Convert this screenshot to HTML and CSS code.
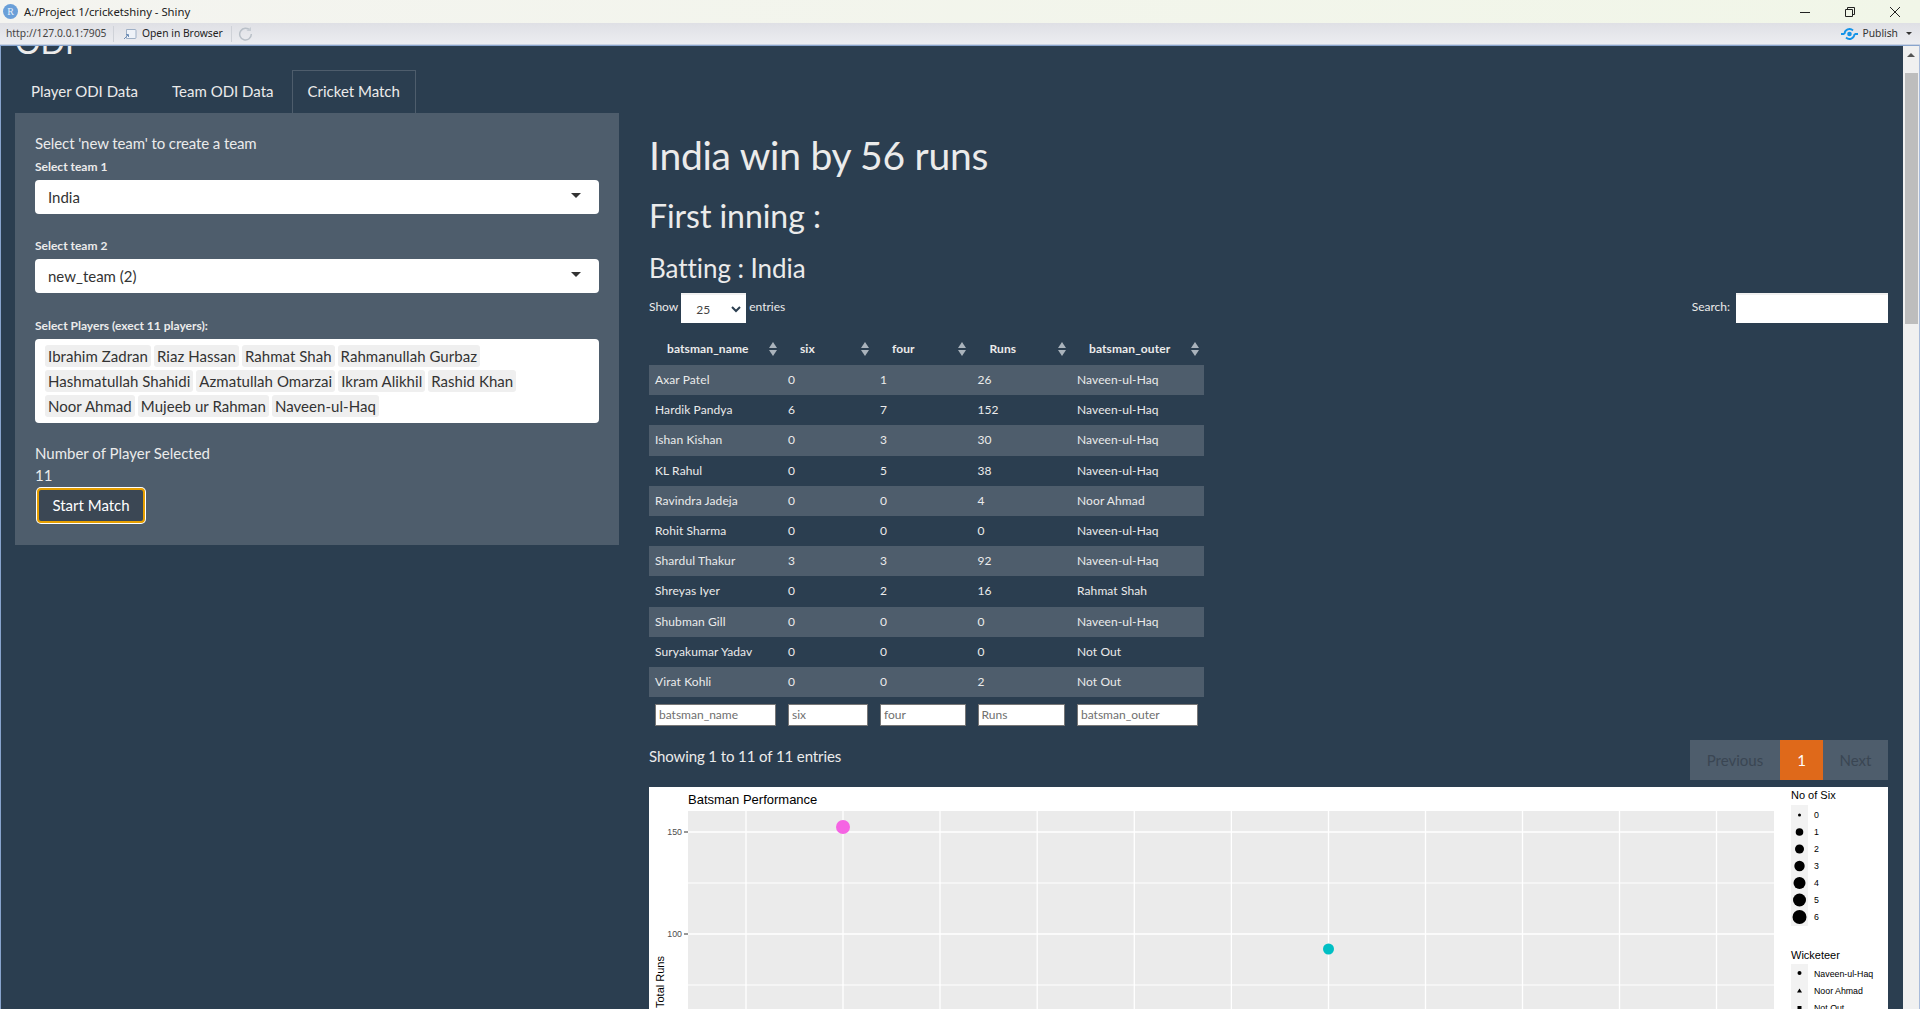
FILE: index.html
```html
<!DOCTYPE html>
<html lang="en">
<head>
    <meta charset="UTF-8">
    <title>A:/Project 1/cricketshiny - Shiny</title>
    <link rel="stylesheet" href="styles.css">
</head>
<body>
<div class="shell">
    <!-- RStudio viewer window chrome -->
    <div class="title-bar">
        <div class="title-left">
            <span class="r-icon">R</span>
            <span>A:/Project 1/cricketshiny - Shiny</span>
        </div>
        <div class="window-controls">
            <svg width="10" height="10" viewBox="0 0 10 10"><path d="M0 5.5H10" stroke="#222" fill="none"/></svg>
            <svg width="10" height="10" viewBox="0 0 10 10"><path d="M.5 2.5h7v7h-7zM2.5 2.5V.5h7v7h-2" stroke="#222" fill="none"/></svg>
            <svg width="10" height="10" viewBox="0 0 10 10"><path d="M0 0L10 10M10 0L0 10" stroke="#222" fill="none"/></svg>
        </div>
    </div>
    <div class="tool-bar">
        <span class="tool-url">http://127.0.0.1:7905</span>
        <span class="tool-sep"></span>
        <svg class="tool-open" width="14" height="14" viewBox="0 0 14 14"><path d="M3.5 2.5h8.5a1 1 0 0 1 1 1v7a1 1 0 0 1-1 1H3.500z" fill="#eef2f8" stroke="#9fb0c6"/><path d="M1 12l4-4M3 7.500h2.500V10" stroke="#6f8fb8" fill="none"/></svg>
        <span>Open in Browser</span>
        <span class="tool-sep tool-sep-wide"></span>
        <svg width="15" height="15" viewBox="0 0 15 15"><path d="M12 4.500A5.800 5.800 0 1 0 13.300 8" stroke="#b9c0c8" stroke-width="1.500" fill="none"/><path d="M8.500 5h4.500V1z" fill="#c6ccd3"/></svg>
        <div class="tool-right">
            <svg width="17" height="14" viewBox="0 0 17 14"><circle cx="8.500" cy="7" r="2.300" fill="#1494e8"/><path d="M0 7h3.500M13.500 7H17M3.500 7a5 5 0 0 1 8.500-3.500M13.500 7a5 5 0 0 1-8.500 3.500" stroke="#1494e8" stroke-width="1.800" fill="none"/></svg>
            <span class="publish-label">Publish</span>
            <span class="publish-caret"></span>
        </div>
    </div>

    <div class="viewport">
        <div class="page">
            <h2 class="app-title">ODI</h2>
            <ul class="tabs">
                <li class="tab">Player ODI Data</li>
                <li class="tab">Team ODI Data</li>
                <li class="tab tab-active">Cricket Match</li>
            </ul>

            <div class="columns">
                <!-- Sidebar -->
                <div class="well">
                    <div class="well-line well-intro">Select 'new team' to create a team</div>
                    <div class="form-group">
                        <label class="control-label">Select team 1</label>
                        <div class="select-box"><span>India</span><span class="select-caret"></span></div>
                    </div>
                    <div class="form-group">
                        <label class="control-label">Select team 2</label>
                        <div class="select-box"><span>new_team (2)</span><span class="select-caret"></span></div>
                    </div>
                    <div class="form-group form-group-multi">
                        <label class="control-label">Select Players (exect 11 players):</label>
                        <div class="multi-box">
                            <span class="chip">Ibrahim Zadran</span>
                            <span class="chip">Riaz Hassan</span>
                            <span class="chip">Rahmat Shah</span>
                            <span class="chip">Rahmanullah Gurbaz</span>
                            <span class="chip">Hashmatullah Shahidi</span>
                            <span class="chip">Azmatullah Omarzai</span>
                            <span class="chip">Ikram Alikhil</span>
                            <span class="chip">Rashid Khan</span>
                            <span class="chip">Noor Ahmad</span>
                            <span class="chip">Mujeeb ur Rahman</span>
                            <span class="chip">Naveen-ul-Haq</span>
                        </div>
                    </div>
                    <div class="well-line">Number of Player Selected</div>
                    <div class="well-line well-count">11</div>
                    <button class="start-btn">Start Match</button>
                </div>

                <!-- Main panel -->
                <div class="main">
                    <h1 class="result">India win by 56 runs</h1>
                    <h2 class="inning">First inning :</h2>
                    <h3 class="batting">Batting : India</h3>

                    <div class="dt-controls">
                        <div class="dt-length">
                            <span>Show</span>
                            <div class="dt-select"><span>25</span><svg width="10" height="7" viewBox="0 0 10 7"><path d="M1 1l4 4 4-4" stroke="#2b3e50" stroke-width="2" fill="none"/></svg></div>
                            <span>entries</span>
                        </div>
                        <div class="dt-search">
                            <span>Search:</span>
                            <div class="dt-search-input"></div>
                        </div>
                    </div>

                    <table class="dt-table">
                        <thead>
                            <tr>
                                <th>batsman_name</th>
                                <th>six</th>
                                <th>four</th>
                                <th>Runs</th>
                                <th>batsman_outer</th>
                            </tr>
                        </thead>
                        <tbody>
                            <tr><td>Axar Patel</td><td>0</td><td>1</td><td>26</td><td>Naveen-ul-Haq</td></tr>
                            <tr><td>Hardik Pandya</td><td>6</td><td>7</td><td>152</td><td>Naveen-ul-Haq</td></tr>
                            <tr><td>Ishan Kishan</td><td>0</td><td>3</td><td>30</td><td>Naveen-ul-Haq</td></tr>
                            <tr><td>KL Rahul</td><td>0</td><td>5</td><td>38</td><td>Naveen-ul-Haq</td></tr>
                            <tr><td>Ravindra Jadeja</td><td>0</td><td>0</td><td>4</td><td>Noor Ahmad</td></tr>
                            <tr><td>Rohit Sharma</td><td>0</td><td>0</td><td>0</td><td>Naveen-ul-Haq</td></tr>
                            <tr><td>Shardul Thakur</td><td>3</td><td>3</td><td>92</td><td>Naveen-ul-Haq</td></tr>
                            <tr><td>Shreyas Iyer</td><td>0</td><td>2</td><td>16</td><td>Rahmat Shah</td></tr>
                            <tr><td>Shubman Gill</td><td>0</td><td>0</td><td>0</td><td>Naveen-ul-Haq</td></tr>
                            <tr><td>Suryakumar Yadav</td><td>0</td><td>0</td><td>0</td><td>Not Out</td></tr>
                            <tr><td>Virat Kohli</td><td>0</td><td>0</td><td>2</td><td>Not Out</td></tr>
                        </tbody>
                        <tfoot>
                            <tr>
                                <td><input placeholder="batsman_name"></td>
                                <td><input placeholder="six"></td>
                                <td><input placeholder="four"></td>
                                <td><input placeholder="Runs"></td>
                                <td><input placeholder="batsman_outer"></td>
                            </tr>
                        </tfoot>
                    </table>

                    <div class="dt-footer">
                        <div class="dt-info">Showing 1 to 11 of 11 entries</div>
                        <div class="pagination">
                            <span class="page-item page-prev">Previous</span>
                            <span class="page-item page-current">1</span>
                            <span class="page-item page-next">Next</span>
                        </div>
                    </div>

                    <!-- ggplot output -->
                    <svg class="plot" width="1239" height="400" viewBox="0 0 1239 400">
                        <rect width="1239" height="400" fill="#fff"/>
                        <text x="39" y="17" class="plot-title">Batsman Performance</text>
                        <rect x="39" y="24" width="1086" height="376" fill="#ebebeb"/>
                        <g stroke="#fff" stroke-width="1">
                            <path d="M39 96H1125M39 198H1125M39 300H1125"/>
                        </g>
                        <g stroke="#fff" stroke-width="1.300">
                            <path d="M39 45H1125M39 147H1125M39 249H1125"/>
                            <path d="M97 24V400M194 24V400M291 24V400M388.200 24V400M485.300 24V400M582.400 24V400M679.500 24V400M776.500 24V400M873.500 24V400M970.500 24V400M1067.500 24V400"/>
                        </g>
                        <circle cx="194" cy="40" r="7" fill="#f564e3"/>
                        <circle cx="679.500" cy="162" r="5.500" fill="#00bfc4"/>
                        <path d="M35 45H39M35 147H39" stroke="#333"/>
                        <text x="33" y="48" class="plot-tick">150</text>
                        <text x="33" y="150" class="plot-tick">100</text>
                        <text transform="translate(15 221) rotate(-90)" class="plot-axis">Total Runs</text>

                        <text x="1142" y="12" class="plot-legend-title">No of Six</text>
                        <rect x="1142" y="18" width="17" height="121" fill="#f2f2f2"/>
                        <circle cx="1150.500" cy="28" r="1.500"/>
                        <circle cx="1150.500" cy="45" r="3.800"/>
                        <circle cx="1150.500" cy="62" r="4.500"/>
                        <circle cx="1150.500" cy="79" r="5.200"/>
                        <circle cx="1150.500" cy="96" r="6"/>
                        <circle cx="1150.500" cy="113" r="6.500"/>
                        <circle cx="1150.500" cy="130" r="7"/>
                        <text x="1165" y="31" class="plot-label">0</text>
                        <text x="1165" y="48" class="plot-label">1</text>
                        <text x="1165" y="65" class="plot-label">2</text>
                        <text x="1165" y="82" class="plot-label">3</text>
                        <text x="1165" y="99" class="plot-label">4</text>
                        <text x="1165" y="116" class="plot-label">5</text>
                        <text x="1165" y="133" class="plot-label">6</text>

                        <text x="1142" y="172" class="plot-legend-title">Wicketeer</text>
                        <rect x="1142" y="177" width="17" height="60" fill="#f2f2f2"/>
                        <circle cx="1150.500" cy="186" r="2"/>
                        <path d="M1150.500 201.500l2.500 4h-5z"/>
                        <rect x="1148.500" y="219" width="4" height="4"/>
                        <text x="1165" y="190" class="plot-label">Naveen-ul-Haq</text>
                        <text x="1165" y="207" class="plot-label">Noor Ahmad</text>
                        <text x="1165" y="224" class="plot-label">Not Out</text>
                    </svg>
                </div>
            </div>
        </div>
        <div class="scrollbar">
            <span class="scroll-up"></span>
            <span class="scroll-thumb"></span>
        </div>
    </div>
</div>
</body>
</html>
```

FILE: styles.css
```css
* { box-sizing: border-box; }
html, body { margin: 0; padding: 0; height: 100%; overflow: hidden; }
body { font-family: 'Lato', sans-serif; font-size: 15px; line-height: 21px; color: #ebebeb; background: #2b3e50; }
.shell { display: flex; flex-direction: column; height: 100vh; }

/* window chrome */
.title-bar { height: 23px; flex: none; display: flex; align-items: center; justify-content: space-between; background: linear-gradient(to right, #f4f4f0, #f1f6e8); color: #222; font-family: 'Noto Sans', sans-serif; font-size: 11.300px; }
.title-left { display: flex; align-items: center; gap: 6px; padding-left: 3px; }
.r-icon { width: 15px; height: 15px; border-radius: 50%; background: #6a9fd8; color: #e8f0fa; font-family: 'Liberation Serif', serif; font-size: 10px; line-height: 15px; text-align: center; }
.window-controls { display: flex; gap: 35px; padding-right: 20px; }
.tool-bar { height: 22px; flex: none; display: flex; align-items: center; padding-left: 6px; background: linear-gradient(to bottom, #dfe0e5, #ecedf1); border-bottom: 1px solid #c9d2e2; color: #222; font-family: 'Noto Sans', sans-serif; font-size: 10.300px; }
.tool-url { color: #444; width: 102px; }
.tool-sep { width: 1px; height: 16px; background: #cfd2d8; margin: 0 9px 0 5px; }
.tool-sep-wide { margin: 0 6px 0 8px; }
.tool-open { margin-right: 5px; }
.tool-right { margin-left: auto; display: flex; align-items: center; padding-right: 8px; }
.publish-label { margin-left: 4px; color: #333; }
.publish-caret { width: 0; height: 0; margin-left: 8px; border-left: 3px solid transparent; border-right: 3px solid transparent; border-top: 3px solid #333; }

/* scrolled app area */
.viewport { flex: 1; min-height: 0; display: flex; border: 1px solid #88a4cd; border-bottom: 0; border-right: 1px solid #a9bcdb; }
.page { flex: 1; min-width: 0; overflow: hidden; padding: 0 15px 0 14px; background: #2b3e50; }
.scrollbar { width: 16px; flex: none; background: #f0f0f0; padding-left: 2px; display: flex; flex-direction: column; }
.scroll-up { width: 0; height: 0; margin: 7px 0 0 2px; border-left: 4px solid transparent; border-right: 4px solid transparent; border-bottom: 4px solid #555; }
.scroll-thumb { width: 13px; height: 251px; margin-top: 16px; background: #bdbdbd; }

h1, h2, h3 { margin: 0; font-weight: 400; line-height: 1.1; color: #ebebeb; }
.app-title { font-size: 32px; margin-top: -22px; margin-bottom: 10.800px; }

.tabs { list-style: none; display: flex; gap: 2px; margin: 0; padding: 0; height: 43px; }
.tab { padding: 10.500px 15px; border: 1px solid transparent; border-bottom: 0; }
.tab-active { border-color: #4e5d6c; }

.columns { display: grid; grid-template-columns: 604px 1fr; gap: 30px; align-items: start; }

/* sidebar */
.well { background: #4e5d6c; padding: 20px 20px 21px; }
.well-intro { letter-spacing: -0.1px; }
.form-group { margin-top: 4px; margin-bottom: 23px; }
.form-group + .form-group { margin-top: 0; }
.form-group-multi { padding-top: 1px; margin-bottom: 20px; }
.control-label { display: block; font-size: 12px; font-weight: 700; line-height: 17px; margin-bottom: 5px; }
.select-box { height: 34px; background: #fff; border-radius: 4px; color: #333; display: flex; align-items: center; justify-content: space-between; padding: 2px 18px 0 13px; }
.select-caret { width: 0; height: 0; border-left: 5px solid transparent; border-right: 5px solid transparent; border-top: 5px solid #333; margin-top: -5px; }
.multi-box { background: #fff; border-radius: 4px; color: #333; display: flex; flex-wrap: wrap; gap: 3px; padding: 6px 10px; }
.chip { height: 22px; line-height: 22px; padding: 0 3px; background: #efefef; border-radius: 3px; letter-spacing: 0.04px; }
.well-line { height: 21px; }
.well-count { margin-top: 1px; }
.start-btn { display: block; width: 108px; height: 35px; margin: 2px 2px 1px; padding: 0; background: #3b4754; border: 2px solid #e69f00; border-radius: 4px; box-shadow: 0 0 0 1px #fff; color: #fff; font: inherit; }

/* main panel */
.result { font-size: 39px; margin-top: 21.500px; letter-spacing: -0.25px; }
.inning { font-size: 32px; margin-top: 20.600px; letter-spacing: -0.05px; }
.batting { font-size: 26px; margin-top: 20.400px; letter-spacing: -0.05px; }

.dt-controls { display: flex; justify-content: space-between; align-items: flex-start; margin-top: 10.800px; font-size: 12px; height: 30px; }
.dt-length, .dt-search { display: flex; align-items: flex-start; line-height: 28px; }
.dt-select { width: 65px; height: 30px; margin: 0 3px; background: #fff; border-top: 2px solid #f0f0f0; color: #444; display: flex; align-items: center; justify-content: space-between; padding: 2px 5px 0 15px; font-size: 12px; }
.dt-search-input { width: 152px; height: 30px; margin-left: 6px; background: #fff; border-top: 2px solid #f0f0f0; }

.dt-table { width: 555px; margin-top: 10px; border-collapse: collapse; table-layout: fixed; font-size: 12px; line-height: 18.200px; letter-spacing: 0.1px; }
.dt-table th:nth-child(1) { width: 133px; }
.dt-table th:nth-child(2) { width: 92px; }
.dt-table th:nth-child(3) { width: 97.500px; }
.dt-table th:nth-child(4) { width: 99.500px; }
.dt-table th:nth-child(5) { width: 133px; }
.dt-table th { position: relative; height: 32px; padding: 0 0 0 18px; text-align: left; font-weight: 700; }
.dt-table th::before, .dt-table th::after { content: ''; position: absolute; right: 5.500px; width: 0; height: 0; border-left: 4.500px solid transparent; border-right: 4.500px solid transparent; }
.dt-table th::before { top: 9px; border-bottom: 6px solid #aab3bc; }
.dt-table th::after { top: 17px; border-top: 6px solid #aab3bc; }
.dt-table td { padding: 6px; }
.dt-table tbody tr:nth-child(odd) { background: #4e5d6c; }
.dt-table tfoot td { padding: 6.500px 6px 7.500px; }
.dt-table input { display: block; width: 100%; height: 22px; padding: 0 3px; border: 1px solid #767676; background: #fff; font-family: inherit; font-size: 12px; }
.dt-table input::placeholder { color: #6f6f6f; }

.dt-footer { display: flex; justify-content: space-between; align-items: flex-start; height: 54px; padding-top: 7px; }
.dt-info { padding-top: 6px; letter-spacing: -0.1px; }
.pagination { display: flex; height: 40px; }
.page-item { height: 40px; line-height: 40px; background: #4e5d6c; color: #3a4653; text-align: center; }
.page-prev { width: 90px; }
.page-current { width: 43px; background: #df691a; color: #fff; }
.page-next { width: 65px; }

/* plot text */
.plot { display: block; }
.plot text { font-family: 'Liberation Sans', Arial, sans-serif; fill: #000; }
.plot .plot-title { font-size: 13px; }
.plot .plot-tick { font-size: 8.800px; fill: #4d4d4d; text-anchor: end; }
.plot .plot-axis { font-size: 11px; }
.plot .plot-legend-title { font-size: 11px; }
.plot .plot-label { font-size: 8.800px; }
```
